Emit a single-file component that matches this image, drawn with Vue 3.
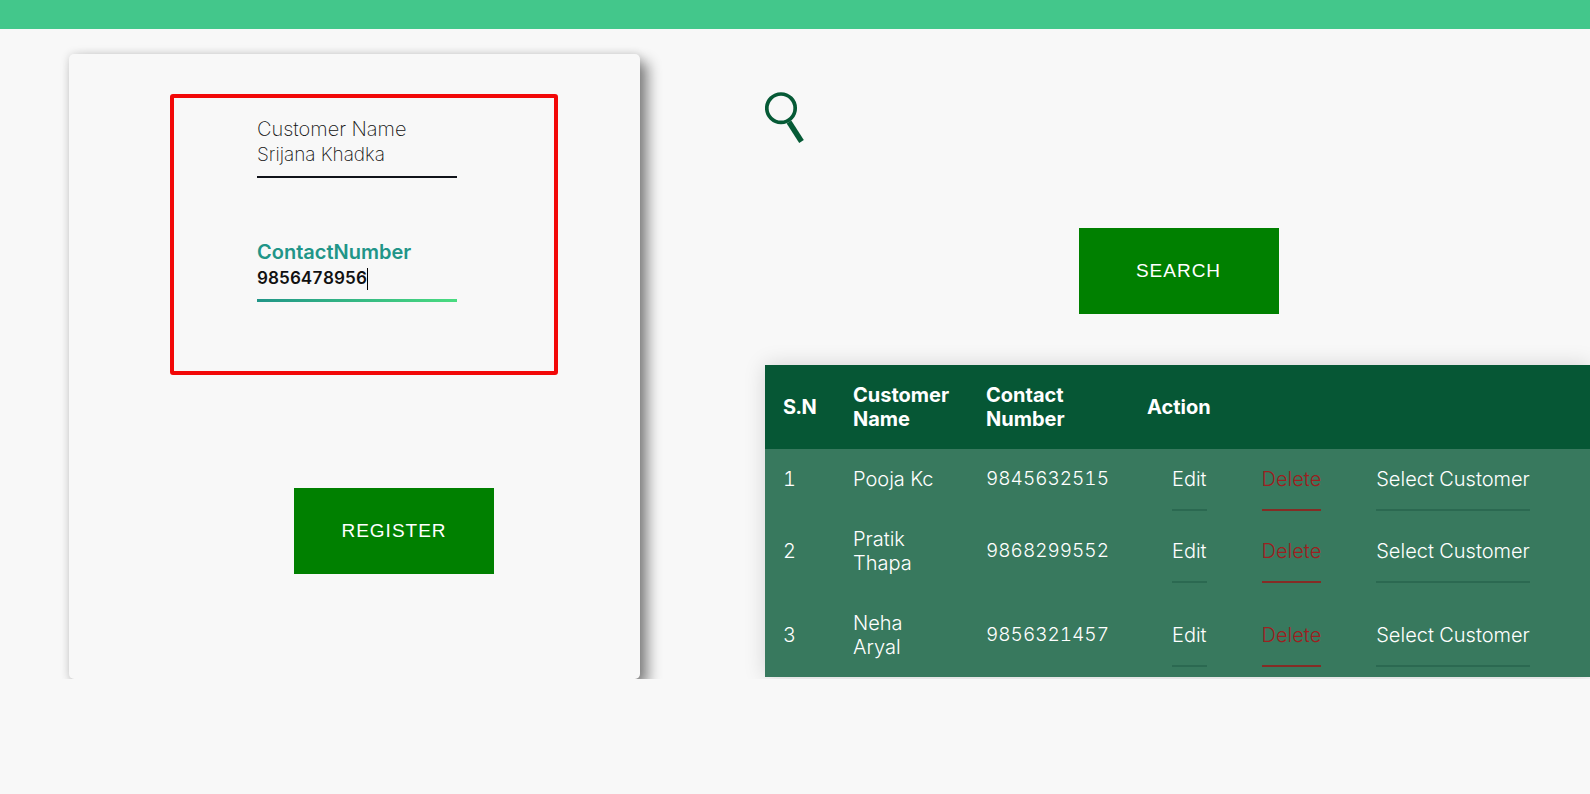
<script setup>
import { ref } from 'vue'

const name = ref('Srijana Khadka')
const contact = ref('9856478956')

const customers = [
  { id: 1, name: 'Pooja Kc', contact: '9845632515' },
  { id: 2, name: 'Pratik Thapa', contact: '9868299552' },
  { id: 3, name: 'Neha Aryal', contact: '9856321457' },
]
</script>

<template>
  <div class="page">
    <header class="topbar"></header>
    <main class="content">
      <form class="card" @submit.prevent>
        <div class="fields">
          <div class="field">
            <label for="name">Customer Name</label>
            <input id="name" v-model="name" type="text" />
          </div>
          <div class="field active">
            <label for="contact">ContactNumber</label>
            <div class="entry">
              <input id="contact" v-model="contact" type="text" />
              <span class="caret"></span>
            </div>
          </div>
        </div>
        <button class="action register" type="submit">REGISTER</button>
      </form>

      <section class="results">
        <button class="lens" type="button" aria-label="Open search">
          <svg width="40" height="52" viewBox="0 0 40 52" fill="none" stroke="#065a36">
            <circle cx="16" cy="16.2" r="14.2" stroke-width="3.7" />
            <path d="M24 30L36.5 49.5" stroke-width="5.5" />
          </svg>
        </button>
        <button class="action search" type="button">SEARCH</button>
        <table>
          <thead>
            <tr>
              <th class="sn">S.N</th>
              <th class="who">Customer Name</th>
              <th class="phone">Contact Number</th>
              <th>Action</th>
            </tr>
          </thead>
          <tbody>
            <tr v-for="c in customers" :key="c.id">
              <td>{{ c.id }}</td>
              <td>{{ c.name }}</td>
              <td class="digits">{{ c.contact }}</td>
              <td class="links">
                <a href="#">Edit</a>
                <a href="#" class="delete">Delete</a>
                <a href="#">Select Customer</a>
              </td>
            </tr>
          </tbody>
        </table>
      </section>
    </main>
  </div>
</template>

<style>
body {
  margin: 0;
  background: #f8f8f8;
}
</style>

<style scoped>
.page {
  min-height: 100vh;
  background: #f8f8f8;
  font-family: Inter, "Liberation Sans", sans-serif;
  font-size: 20px;
  line-height: 24px;
  font-weight: 300;
  font-variant-numeric: tabular-nums;
}

.topbar {
  height: 29px;
  background: #43c78b;
}

.content {
  display: grid;
  grid-template-columns: 571fr 825fr;
  column-gap: 125px;
  padding: 25px 0 0 69px;
  overflow: hidden;
}

.card {
  box-sizing: border-box;
  padding: 40px 0 105px;
  border-radius: 5px;
  box-shadow: 0 0 10px rgba(0, 0, 0, 0.14), 8px 8px 14px rgba(0, 0, 0, 0.45);
  background: #f8f8f8;
}

.fields {
  box-sizing: border-box;
  width: 68%;
  margin-left: 101px;
  padding: 19px 0 69px 83px;
  border: 4px solid #f20808;
  border-radius: 3px;
}

.field {
  width: 200px;
}

.field + .field {
  margin-top: 62px;
}

label {
  display: block;
  font-weight: 200;
  color: #111;
}

input {
  display: block;
  box-sizing: border-box;
  width: 100%;
  height: 37px;
  margin: 0;
  padding: 0 0 8px;
  border: 0;
  border-bottom: 2px solid #11141a;
  border-radius: 0;
  outline: 0;
  background: transparent;
  font-family: inherit;
  font-size: 19px;
  font-weight: 200;
  font-variant-numeric: inherit;
  color: #111;
}

.entry {
  position: relative;
}

.active label {
  font-weight: 600;
  color: #219588;
}

.active input {
  height: 38px;
  border-bottom: 3px solid;
  border-image: linear-gradient(to right, #219588, #4adc80) 1;
  font-size: 17px;
  font-weight: 600;
}

.caret {
  position: absolute;
  left: 110px;
  top: 4px;
  width: 1px;
  height: 22px;
  background: #000;
}

.action {
  display: block;
  width: 200px;
  height: 86px;
  padding: 0;
  border: 0;
  background: #008000;
  color: #fff;
  font-family: "Liberation Sans", Arial, sans-serif;
  font-size: 19px;
  letter-spacing: 1px;
}

.register {
  margin: 113px 0 0 225px;
}

.lens {
  display: block;
  margin: 38px 0 0;
  padding: 0;
  border: 0;
  background: none;
}

.lens svg {
  display: block;
}

.search {
  margin: 84px auto 51px 38%;
}

table {
  width: 100%;
  margin-bottom: 2px;
  table-layout: fixed;
  border-collapse: collapse;
  box-shadow: 0 0 20px rgba(0, 0, 0, 0.15);
  background: #38795e;
  color: #fff;
}

thead {
  background: #065735;
}

th,
td {
  padding: 18px;
  text-align: left;
  vertical-align: middle;
}

th {
  font-weight: 700;
}

.sn {
  width: 34px;
}

.who {
  width: 97px;
}

.phone {
  width: 125px;
}

.digits {
  font-size: 19px;
}

.links {
  padding-right: 0;
  white-space: nowrap;
}

a {
  margin: 0 25px;
  padding-bottom: 18px;
  border-bottom: 2px solid #2b6951;
  color: inherit;
  text-decoration: none;
}

a + a {
  margin-left: 30px;
}

.delete {
  border-color: #852c25;
  color: #9d2020;
}
</style>
